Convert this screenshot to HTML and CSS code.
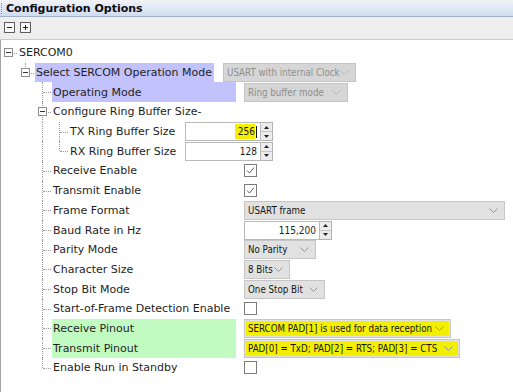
FILE: index.html
```html
<!DOCTYPE html>
<html lang="en">
<head>
    <meta charset="UTF-8">
    <title>Configuration Options</title>
    <link rel="stylesheet" href="styles.css">
</head>
<body>
    <div class="titlebar"><span class="grip"></span>Configuration Options</div>
    <div class="toolbar">
        <span class="tbtn minus"></span>
        <span class="tbtn plus"></span>
    </div>

    <div class="tree">
        <div class="row">
            <span class="g exp"><i class="box"></i></span>
            <span class="label">SERCOM0</span>
        </div>
        <div class="row">
            <span class="g"></span><span class="g exp up"><i class="box"></i></span>
            <span class="label blue">Select SERCOM Operation Mode</span>
            <span class="combo off c-mode">USART with internal Clock<svg class="chev" width="9" height="5"><polyline points="0.5,0.5 4.5,4.5 8.5,0.5"/></svg></span>
        </div>
        <div class="row">
            <span class="g"></span><span class="g"></span><span class="g tee"></span>
            <span class="label l2 blue">Operating Mode</span>
            <span class="combo off c-op">Ring buffer mode<svg class="chev" width="9" height="5"><polyline points="0.5,0.5 4.5,4.5 8.5,0.5"/></svg></span>
        </div>
        <div class="row">
            <span class="g"></span><span class="g"></span><span class="g exp pipe"><i class="box"></i></span>
            <span class="label">Configure Ring Buffer Size-</span>
        </div>
        <div class="row">
            <span class="g"></span><span class="g"></span><span class="g pipe"></span><span class="g tee"></span>
            <span class="label l3">TX Ring Buffer Size</span>
            <span class="spin">
                <span class="field"><span class="mark">256</span><i class="caret"></i></span>
                <span class="arrows">
                    <span class="arr"><svg width="5" height="3"><path d="M0 3L2.5 0L5 3Z"/></svg></span>
                    <span class="arr"><svg width="5" height="3"><path d="M0 0L2.5 3L5 0Z"/></svg></span>
                </span>
            </span>
        </div>
        <div class="row">
            <span class="g"></span><span class="g"></span><span class="g pipe"></span><span class="g end"></span>
            <span class="label l3">RX Ring Buffer Size</span>
            <span class="spin">
                <span class="field">128</span>
                <span class="arrows">
                    <span class="arr"><svg width="5" height="3"><path d="M0 3L2.5 0L5 3Z"/></svg></span>
                    <span class="arr"><svg width="5" height="3"><path d="M0 0L2.5 3L5 0Z"/></svg></span>
                </span>
            </span>
        </div>
        <div class="row">
            <span class="g"></span><span class="g"></span><span class="g tee"></span>
            <span class="label l2">Receive Enable</span>
            <svg class="cb" width="13" height="13"><rect x="0.5" y="0.5" width="12" height="12"/><polyline points="3,6.5 5.5,9 10,3.5"/></svg>
        </div>
        <div class="row">
            <span class="g"></span><span class="g"></span><span class="g tee"></span>
            <span class="label l2">Transmit Enable</span>
            <svg class="cb" width="13" height="13"><rect x="0.5" y="0.5" width="12" height="12"/><polyline points="3,6.5 5.5,9 10,3.5"/></svg>
        </div>
        <div class="row">
            <span class="g"></span><span class="g"></span><span class="g tee"></span>
            <span class="label l2">Frame Format</span>
            <span class="combo c-frame">USART frame<svg class="chev" width="9" height="5"><polyline points="0.5,0.5 4.5,4.5 8.5,0.5"/></svg></span>
        </div>
        <div class="row">
            <span class="g"></span><span class="g"></span><span class="g tee"></span>
            <span class="label l2">Baud Rate in Hz</span>
            <span class="spin">
                <span class="field">115,200</span>
                <span class="arrows">
                    <span class="arr"><svg width="5" height="3"><path d="M0 3L2.5 0L5 3Z"/></svg></span>
                    <span class="arr"><svg width="5" height="3"><path d="M0 0L2.5 3L5 0Z"/></svg></span>
                </span>
            </span>
        </div>
        <div class="row">
            <span class="g"></span><span class="g"></span><span class="g tee"></span>
            <span class="label l2">Parity Mode</span>
            <span class="combo c-parity">No Parity<svg class="chev" width="9" height="5"><polyline points="0.5,0.5 4.5,4.5 8.5,0.5"/></svg></span>
        </div>
        <div class="row">
            <span class="g"></span><span class="g"></span><span class="g tee"></span>
            <span class="label l2">Character Size</span>
            <span class="combo c-char">8 Bits<svg class="chev" width="9" height="5"><polyline points="0.5,0.5 4.5,4.5 8.5,0.5"/></svg></span>
        </div>
        <div class="row">
            <span class="g"></span><span class="g"></span><span class="g tee"></span>
            <span class="label l2">Stop Bit Mode</span>
            <span class="combo c-stop">One Stop Bit<svg class="chev" width="9" height="5"><polyline points="0.5,0.5 4.5,4.5 8.5,0.5"/></svg></span>
        </div>
        <div class="row">
            <span class="g"></span><span class="g"></span><span class="g tee"></span>
            <span class="label l2">Start-of-Frame Detection Enable</span>
            <svg class="cb" width="13" height="13"><rect x="0.5" y="0.5" width="12" height="12"/></svg>
        </div>
        <div class="row">
            <span class="g"></span><span class="g"></span><span class="g tee"></span>
            <span class="label l2 green">Receive Pinout</span>
            <span class="combo yellow c-rxpin">SERCOM PAD[1] is used for data reception<svg class="chev" width="9" height="5"><polyline points="0.5,0.5 4.5,4.5 8.5,0.5"/></svg></span>
        </div>
        <div class="row">
            <span class="g"></span><span class="g"></span><span class="g tee"></span>
            <span class="label l2 green">Transmit Pinout</span>
            <span class="combo yellow c-txpin">PAD[0] = TxD; PAD[2] = RTS; PAD[3] = CTS<svg class="chev" width="9" height="5"><polyline points="0.5,0.5 4.5,4.5 8.5,0.5"/></svg></span>
        </div>
        <div class="row">
            <span class="g"></span><span class="g"></span><span class="g end"></span>
            <span class="label l2">Enable Run in Standby</span>
            <svg class="cb" width="13" height="13"><rect x="0.5" y="0.5" width="12" height="12"/></svg>
        </div>
    </div>
</body>
</html>
```

FILE: styles.css
```css
body {
    margin: 0;
    background: #fff;
    font-family: "DejaVu Sans", Verdana, sans-serif;
    font-size: 11px;
    color: #1e1e1e;
}

/* panel header */
.titlebar {
    display: flex;
    align-items: center;
    height: 15px;
    border-top: 1px solid #f2f2f2;
    border-bottom: 1px solid #9eb0cc;
    background: linear-gradient(#edf1fa, #d2dcf0);
    font-size: 11px;
    font-weight: bold;
    color: #0c0c0c;
}
.grip {
    width: 0;
    height: 11px;
    margin: 0 4px 0 1px;
    border-left: 1px dotted #7d8ba3;
}

.toolbar {
    display: flex;
    gap: 5px;
    height: 23px;
    box-sizing: border-box;
    padding: 5px 0 0 4px;
    background: #eeeeee;
    border-bottom: 1px solid #c9c9c9;
}
.tbtn {
    width: 11px;
    height: 11px;
    box-sizing: border-box;
    border: 1px solid #5e5e5e;
    background: linear-gradient(#222, #222) center / 5px 1px no-repeat, #f7f7f7;
}
.tbtn.plus {
    background: linear-gradient(#222, #222) center / 5px 1px no-repeat,
                linear-gradient(#222, #222) center / 1px 5px no-repeat, #f7f7f7;
}

/* tree */
.tree {
    padding-top: 3px;
    height: 349px;
    box-shadow: inset 1px 0 #a3a3a3;
}
.row {
    display: flex;
    align-items: center;
    height: 19.7px;
    white-space: nowrap;
}

/* guide cell: left half | line | right half, top and bottom halves */
.g {
    flex: none;
    width: 17px;
    height: 100%;
    display: grid;
    grid-template-columns: 8px 1px 8px;
    grid-template-rows: 1fr 1fr;
}
.g.pipe::before,
.g.tee::before,
.g.end::before,
.g.up::before {
    content: "";
    grid-column: 2;
    grid-row: 1 / 3;
    border-left: 1px dotted #999;
}
.g.end::before,
.g.up::before { grid-row: 1; }
.g.tee::after,
.g.end::after,
.g.exp::after {
    content: "";
    grid-column: 3;
    grid-row: 2;
    border-top: 1px dotted #999;
}
.box {
    grid-column: 1 / 4;
    grid-row: 1 / 3;
    align-self: center;
    justify-self: center;
    z-index: 1;
    width: 9px;
    height: 9px;
    box-sizing: border-box;
    border: 1px solid #8c8c8c;
    background: linear-gradient(#333, #333) center / 5px 1px no-repeat, #fff;
}

.label {
    display: flex;
    align-items: center;
    height: 100%;
    box-sizing: border-box;
    margin-left: 1px;
    padding: 0 2px 0 1px;
}
.label.l2 { width: 184px; }
.label.l3 { width: 108px; }
.blue { background: #c2c2fd; }
.green { background: #c1fbc1; }

/* editors */
.combo {
    display: flex;
    align-items: center;
    flex: none;
    height: 19px;
    box-sizing: border-box;
    margin-left: 8px;
    padding: 0 6px 0 3px;
    border: 1px solid #c6c6c6;
    background: #e1e1e1;
    font-family: "DejaVu Sans Condensed", "DejaVu Sans", sans-serif;
    font-stretch: condensed;
    font-size: 9.7px;
    color: #151515;
}
.combo .chev {
    flex: none;
    margin-left: auto;
    fill: none;
    stroke: #949494;
}
.combo.off {
    background: #d6d6d6;
    border-color: #c4c4c4;
    color: #8e8e8e;
}
.combo.off .chev { stroke: #b4b4b4; }
.combo.yellow {
    background: #f3ef00;
    box-shadow: inset 0 0 0 1px #e2e2e2;
}
.c-mode { width: 133px; margin-left: 9px; }
.c-op { width: 104px; }
.c-frame { width: 261px; }
.c-parity { width: 72px; }
.c-char { width: 46px; }
.c-stop { width: 81px; }
.c-rxpin { width: 207px; }
.c-txpin { width: 216px; }

.spin {
    display: flex;
    flex: none;
    height: 19px;
    margin-left: 8px;
    font-family: "DejaVu Sans Condensed", "DejaVu Sans", sans-serif;
    font-stretch: condensed;
    font-size: 10px;
}
.field {
    display: flex;
    align-items: center;
    justify-content: flex-end;
    width: 76px;
    box-sizing: border-box;
    padding-right: 3px;
    border: 1px solid #b9b9b9;
    background: #fff;
}
.mark {
    background: #f3ef00;
    padding: 2px 0 2px 3px;
}
.caret {
    width: 1px;
    height: 12px;
    background: #111;
    margin-left: 1px;
}
.arrows {
    display: flex;
    flex-direction: column;
    width: 12px;
    box-sizing: border-box;
    border: 1px solid #b3b3b3;
    border-left: none;
}
.arr {
    flex: 1;
    display: flex;
    align-items: center;
    justify-content: center;
    background: #ececec;
}
.arr + .arr { border-top: 1px solid #c6c6c6; }
.arr svg { fill: #222; }

.cb {
    flex: none;
    margin-left: 8px;
    fill: #fff;
    stroke: #7c7c7c;
}
.cb polyline {
    fill: none;
    stroke: #5c5c5c;
}
```
